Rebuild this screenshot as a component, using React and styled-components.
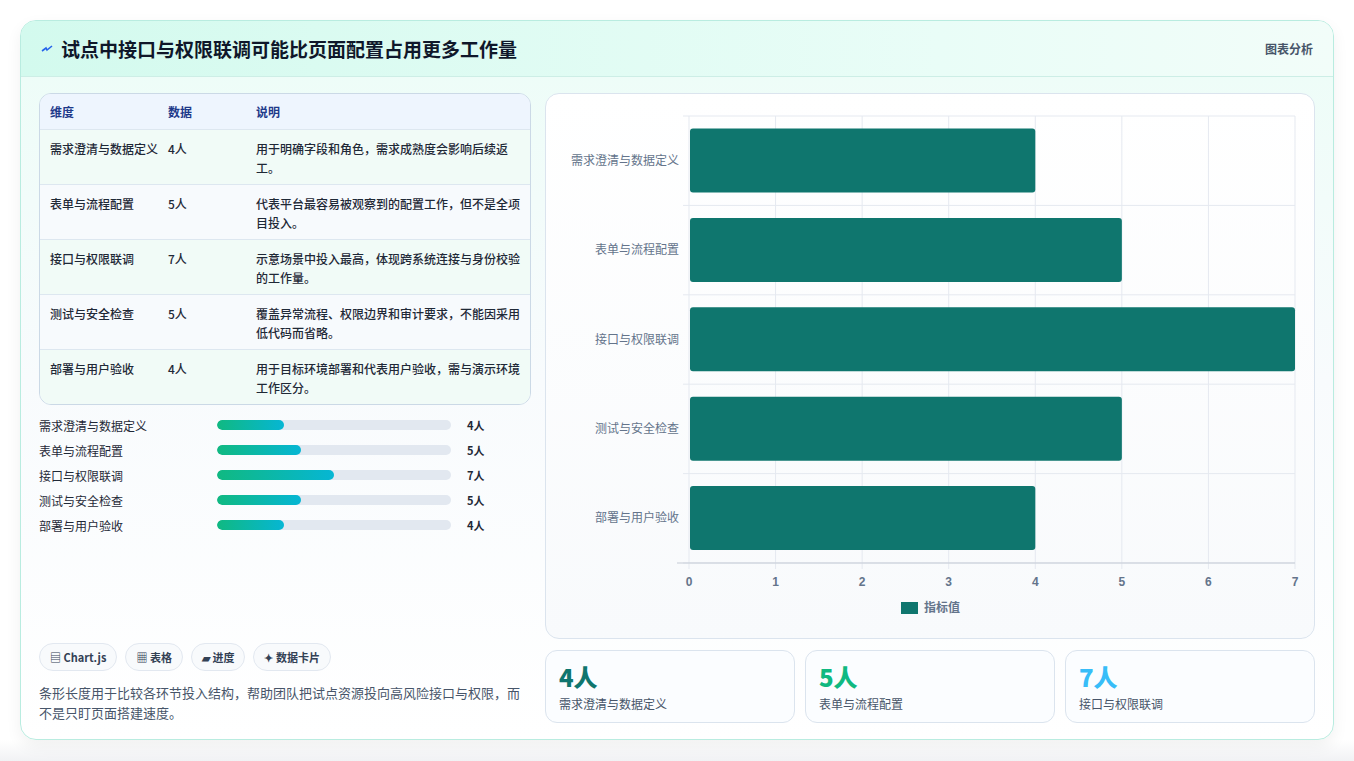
import React from "react";
import styled, { createGlobalStyle } from "styled-components";

const G = createGlobalStyle`
  body{margin:0;background:#f3f4f6;font-family:"Noto Sans CJK SC","Noto Sans",sans-serif;}
`;
const Page = styled.div`width:1354px;height:761px;padding:20px;box-sizing:border-box;background:linear-gradient(#fff,#fff 740px,#f1f2f4);`;
const Card = styled.div`width:1314px;height:720px;box-sizing:border-box;border:1px solid #b9ece0;border-radius:16px;background:linear-gradient(180deg,#ecfdf7 0%,#f8fbfd 50%,#fff 100%);overflow:hidden;display:flex;flex-direction:column;box-shadow:0 6px 16px rgba(0,0,0,.06);`;
const Header = styled.div`height:55px;flex:none;display:flex;align-items:center;justify-content:space-between;padding:0 20px 0 20px;background:linear-gradient(90deg,#d3faee,#e9fdf7 70%,#f2fdf9);border-bottom:1px solid #cdeee6;`;
const Title = styled.h1`margin:0;font-size:19px;font-weight:700;color:#0f172a;display:flex;align-items:center;gap:8px;`;
const Tag = styled.span`font-size:12px;color:#475569;font-weight:600;`;
const Body = styled.div`flex:1;display:grid;grid-template-columns:492px 770px;gap:14px;padding:16px 18px 18px 18px;`;
const Left = styled.div`display:flex;flex-direction:column;`;
const Table = styled.div`border:1px solid #cbd9e6;border-radius:12px;overflow:hidden;background:#f6faff;`;
const Row = styled.div`display:grid;grid-template-columns:118px 88px 1fr;padding:${p=>p.head?"8px 10px":"9px 10px 7px"};min-height:${p=>p.head?"16px":"37px"};background:${p=>p.head?"#eef5fe":p.alt?"#f7fafd":"#f1fbf7"};border-top:${p=>p.head?"none":"1px solid #dde7f0"};font-size:12px;line-height:19px;color:${p=>p.head?"#1e3a8a":"#1f2937"};font-weight:${p=>p.head?700:500};`;
const Bars = styled.div`display:flex;flex-direction:column;gap:7px;margin-top:11px;`;
const BarRow = styled.div`display:grid;grid-template-columns:178px 242px 1fr;gap:0 0;align-items:center;font-size:12px;color:#1f2937;height:18px;`;
const Track = styled.div`height:10px;border-radius:5px;background:#e2e8f0;overflow:hidden;margin-right:8px;`;
const Fill = styled.div`height:100%;border-radius:5px;background:linear-gradient(90deg,#10b981,#06b6d4);`;
const Val = styled.span`font-weight:700;font-size:11px;padding-left:8px;`;
const Spacer = styled.div`flex:1;`;
const Chips = styled.div`display:flex;gap:8px;`;
const Chip = styled.span`font-size:11px;font-weight:700;color:#334155;background:#f8fafc;border:1px solid #e2e8f0;border-radius:14px;padding:5px 10px;`;
const Note = styled.p`margin:12px 0 0;font-size:13px;line-height:20px;color:#475569;`;
const Right = styled.div`display:flex;flex-direction:column;gap:11px;`;
const ChartBox = styled.div`height:544px;border:1px solid #dbe4ee;border-radius:14px;background:linear-gradient(#fff,#f8fafc);position:relative;`;
const Stats = styled.div`display:grid;grid-template-columns:repeat(3,1fr);gap:10px;`;
const Stat = styled.div`height:73px;box-sizing:border-box;border:1px solid #dbe4ee;border-radius:12px;background:#fbfdff;padding:12px 13px;`;
const Big = styled.div`font-size:24px;font-weight:800;line-height:28px;color:${p=>p.c};`;
const Small = styled.div`font-size:12px;color:#475569;margin-top:4px;`;

const data=[["需求澄清与数据定义",4,"用于明确字段和角色，需求成熟度会影响后续返工。"],["表单与流程配置",5,"代表平台最容易被观察到的配置工作，但不是全项目投入。"],["接口与权限联调",7,"示意场景中投入最高，体现跨系统连接与身份校验的工作量。"],["测试与安全检查",5,"覆盖异常流程、权限边界和审计要求，不能因采用低代码而省略。"],["部署与用户验收",4,"用于目标环境部署和代表用户验收，需与演示环境工作区分。"]];

function Chart(){
  const x0=143,w=606,y0=22,h=447,step=w/7,rh=h/5;
  return <svg width="770" height="544" style={{display:"block"}}>
    {[0,1,2,3,4,5,6,7].map(i=><line key={i} x1={x0+i*step} x2={x0+i*step} y1={y0} y2={y0+h+6} stroke="#e5e9f0"/>)}
    {[0,1,2,3,4,5].map(i=><line key={i} x1={x0-6} x2={x0+w} y1={y0+i*rh} y2={y0+i*rh} stroke="#e5e9f0"/>)}
    <line x1={x0-12} x2={x0+w} y1={y0+h} y2={y0+h} stroke="#c5cbd5"/>
    {data.map((d,i)=><g key={i}>
      <rect x={x0+1} y={y0+i*rh+12.5} width={d[1]*step-1} height={64} rx="3" fill="#0f766e"/>
      <text x={x0-10} y={y0+i*rh+rh/2+4} textAnchor="end" fontSize="12" fill="#64748b">{d[0]}</text>
    </g>)}
    {[0,1,2,3,4,5,6,7].map(i=><text key={i} x={x0+i*step} y={y0+h+23} textAnchor="middle" fontSize="12" fontWeight="700" fill="#64748b" fontFamily="Liberation Sans">{i}</text>)}
    <rect x="355" y="508" width="17" height="12" fill="#0f766e"/>
    <text x="378" y="518" fontSize="12" fontWeight="600" fill="#64748b">指标值</text>
  </svg>;
}

export default function App(){
  return <Page><G/><Card>
    <Header><Title><svg width="12" height="10" viewBox="0 0 12 10"><path d="M1 7 L5 4 L6 6 L11 2" stroke="#2563eb" strokeWidth="1.6" fill="none"/></svg>试点中接口与权限联调可能比页面配置占用更多工作量</Title><Tag>图表分析</Tag></Header>
    <Body>
      <Left>
        <Table>
          <Row head><span>维度</span><span>数据</span><span>说明</span></Row>
          {data.map((d,i)=><Row key={i} alt={i%2}><span>{d[0]}</span><span>{d[1]}人</span><span>{d[2]}</span></Row>)}
        </Table>
        <Bars>{data.map((d,i)=><BarRow key={i}><span>{d[0]}</span><Track><Fill style={{width:`${d[1]/14*100}%`}}/></Track><Val>{d[1]}人</Val></BarRow>)}</Bars>
        <Spacer/>
        <Chips><Chip>▤ Chart.js</Chip><Chip>▦ 表格</Chip><Chip>▰ 进度</Chip><Chip>✦ 数据卡片</Chip></Chips>
        <Note>条形长度用于比较各环节投入结构，帮助团队把试点资源投向高风险接口与权限，而不是只盯页面搭建速度。</Note>
      </Left>
      <Right>
        <ChartBox><Chart/></ChartBox>
        <Stats>
          <Stat><Big c="#0f766e">4人</Big><Small>需求澄清与数据定义</Small></Stat>
          <Stat><Big c="#10b981">5人</Big><Small>表单与流程配置</Small></Stat>
          <Stat><Big c="#38bdf8">7人</Big><Small>接口与权限联调</Small></Stat>
        </Stats>
      </Right>
    </Body>
  </Card></Page>;
}
